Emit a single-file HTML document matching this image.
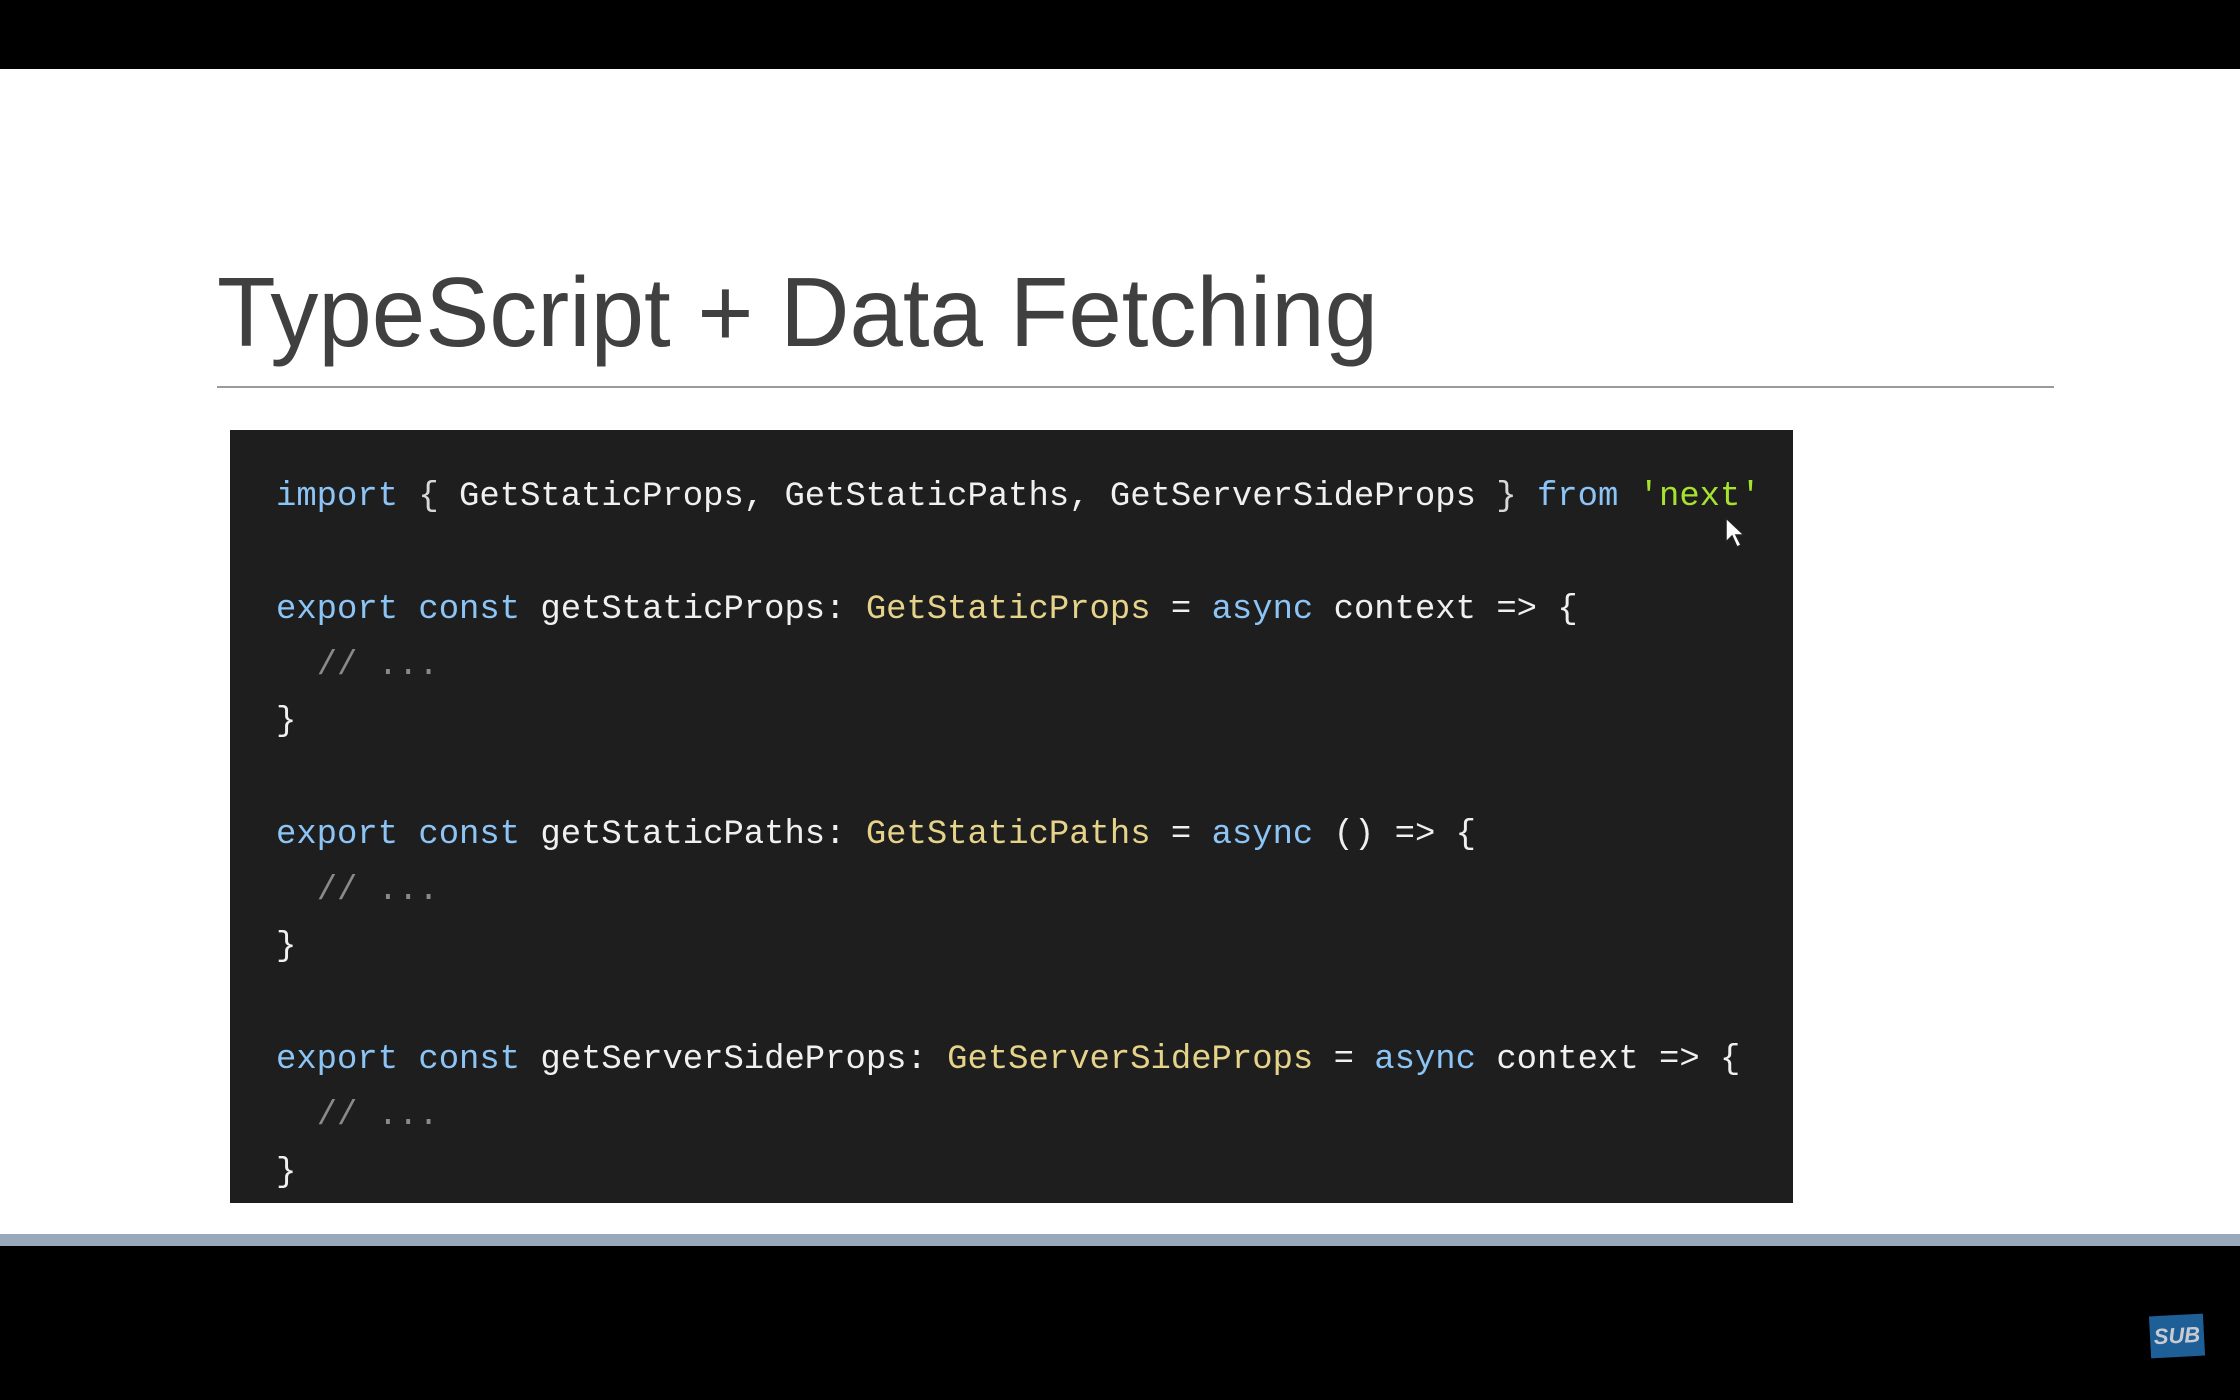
<!DOCTYPE html>
<html><head><meta charset="utf-8"><style>
html,body{margin:0;padding:0;}
body{width:2240px;height:1400px;background:#000;position:relative;overflow:hidden;}
.slide{position:absolute;left:0;top:69px;width:2240px;height:1165px;background:#fff;}
.band{position:absolute;left:0;top:1234px;width:2240px;height:12px;background:#9aa8bc;}
.title{position:absolute;left:217px;top:252px;font-family:"Liberation Sans",sans-serif;font-size:98px;color:#404040;white-space:nowrap;transform:scaleX(0.98);transform-origin:left top;line-height:120px;}
.rule{position:absolute;left:217px;top:386px;width:1837px;height:2px;background:#9a9a9a;}
.code{position:absolute;left:230px;top:430px;width:1563px;height:773px;background:#1e1e1f;}
pre{position:absolute;left:276px;top:469px;margin:0;font-family:"Liberation Mono",monospace;font-size:33.9px;line-height:56.3px;color:#f0f0f0;}
.k{color:#8cc4f5}.t{color:#e6d38a}.s{color:#a6e22e}.c{color:#8a8a8a}.p{color:#d8d8d8}
.sub{position:absolute;left:2150px;top:1315px;width:54px;height:42px;background:#1d5f96;transform:rotate(-3deg);color:#c8ccd2;font:italic bold 22px "Liberation Sans",sans-serif;text-align:center;line-height:42px;}
</style></head><body>
<div class="slide"></div>
<div class="band"></div>
<div class="title">TypeScript + Data Fetching</div>
<div class="rule"></div>
<div class="code"></div>
<pre><span class="k">import</span> <span class="p">{</span> GetStaticProps, GetStaticPaths, GetServerSideProps <span class="p">}</span> <span class="k">from</span> <span class="s">'next'</span>

<span class="k">export</span> <span class="k">const</span> getStaticProps: <span class="t">GetStaticProps</span> = <span class="k">async</span> context =&gt; {
  <span class="c">// ...</span>
}

<span class="k">export</span> <span class="k">const</span> getStaticPaths: <span class="t">GetStaticPaths</span> = <span class="k">async</span> () =&gt; {
  <span class="c">// ...</span>
}

<span class="k">export</span> <span class="k">const</span> getServerSideProps: <span class="t">GetServerSideProps</span> = <span class="k">async</span> context =&gt; {
  <span class="c">// ...</span>
}</pre>
<svg style="position:absolute;left:1725px;top:517px" width="24" height="34" viewBox="0 0 24 34"><path d="M1 1 L1 25 L7 19 L12 30 L16 28 L11 18 L19 18 Z" fill="#fff" stroke="#222" stroke-width="1.5"/></svg>
<div class="sub">SUB</div>
</body></html>
